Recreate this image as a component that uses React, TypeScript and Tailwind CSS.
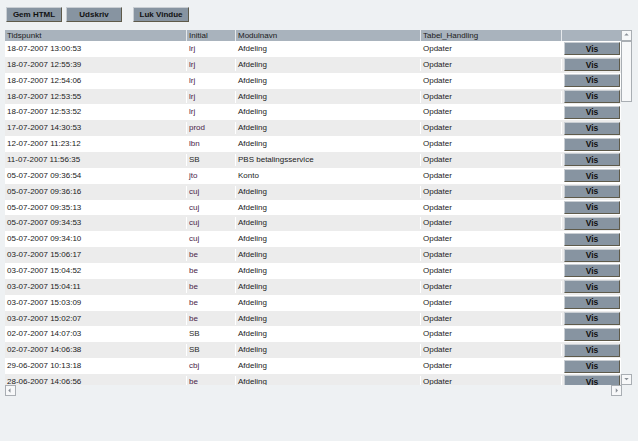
import React from "react";

const rows: [string, string, string, string][] = [
  ["18-07-2007 13:00:53", "lrj", "Afdeling", "Opdater"],
  ["18-07-2007 12:55:39", "lrj", "Afdeling", "Opdater"],
  ["18-07-2007 12:54:06", "lrj", "Afdeling", "Opdater"],
  ["18-07-2007 12:53:55", "lrj", "Afdeling", "Opdater"],
  ["18-07-2007 12:53:52", "lrj", "Afdeling", "Opdater"],
  ["17-07-2007 14:30:53", "prod", "Afdeling", "Opdater"],
  ["12-07-2007 11:23:12", "lbn", "Afdeling", "Opdater"],
  ["11-07-2007 11:56:35", "SB", "PBS betalingsservice", "Opdater"],
  ["05-07-2007 09:36:54", "jto", "Konto", "Opdater"],
  ["05-07-2007 09:36:16", "cuj", "Afdeling", "Opdater"],
  ["05-07-2007 09:35:13", "cuj", "Afdeling", "Opdater"],
  ["05-07-2007 09:34:53", "cuj", "Afdeling", "Opdater"],
  ["05-07-2007 09:34:10", "cuj", "Afdeling", "Opdater"],
  ["03-07-2007 15:06:17", "be", "Afdeling", "Opdater"],
  ["03-07-2007 15:04:52", "be", "Afdeling", "Opdater"],
  ["03-07-2007 15:04:11", "be", "Afdeling", "Opdater"],
  ["03-07-2007 15:03:09", "be", "Afdeling", "Opdater"],
  ["03-07-2007 15:02:07", "be", "Afdeling", "Opdater"],
  ["02-07-2007 14:07:03", "SB", "Afdeling", "Opdater"],
  ["02-07-2007 14:06:38", "SB", "Afdeling", "Opdater"],
  ["29-06-2007 10:13:18", "cbj", "Afdeling", "Opdater"],
  ["28-06-2007 14:06:56", "be", "Afdeling", "Opdater"],
];

const cols = "grid grid-cols-[182px_49px_185px_141px_59px]";

function GrayButton({ label, className = "" }: { label: string; className?: string }) {
  return (
    <button
      className={`h-[15px] w-[56px] border border-t-[#c9ced3] border-l-[#c9ced3] border-b-[#5e5a4a] border-r-[#5e5a4a] bg-[#8794a1] text-[8px] font-bold leading-none text-[#111] ${className}`}
    >
      {label}
    </button>
  );
}

function ArrowBox({ dir }: { dir: "up" | "down" | "left" | "right" }) {
  const tri: Record<string, string> = {
    up: "3,6 6,3 9,6",
    down: "3,4 6,7 9,4",
    left: "6,3 3,6 6,9",
    right: "5,3 8,6 5,9",
  };
  return (
    <div className="flex h-[11px] w-[11px] items-center justify-center border border-[#a9aeb3] bg-[#f7f8f9]">
      <svg width="11" height="11" viewBox="0 0 12 12">
        <polygon points={tri[dir]} fill="#8a9097" />
      </svg>
    </div>
  );
}

export default function App() {
  return (
    <div
      className="h-[441px] w-[638px] overflow-hidden bg-[#eef1f3] text-[8px] text-[#222]"
      style={{ fontFamily: "Arial, 'Liberation Sans', sans-serif" }}
    >
      <div className="flex gap-[4px] pl-[6px] pt-[7px]">
        <GrayButton label="Gem HTML" />
        <GrayButton label="Udskriv" />
        <GrayButton label="Luk Vindue" className="ml-[7px]" />
      </div>

      <div className="ml-[5px] mt-[8px] w-[629px]">
        <div className="flex h-[355px]">
          <div className="w-[616px] overflow-hidden">
            <div className={`${cols} h-[11px] bg-[#a9b3bd] leading-[11px] text-[#1a1a1a]`}>
              <div className="border-r border-[#e6e9ec] pl-[2px]">Tidspunkt</div>
              <div className="border-r border-[#e6e9ec] pl-[2px]">Initial</div>
              <div className="border-r border-[#e6e9ec] pl-[2px]">Modulnavn</div>
              <div className="border-r border-[#e6e9ec] pl-[2px]">Tabel_Handling</div>
              <div></div>
            </div>
            {rows.map((r, i) => (
              <div
                key={i}
                className={`${cols} h-[15.86px] items-center ${i % 2 === 0 ? "bg-white" : "bg-[#ececec]"}`}
              >
                <div className="border-r border-white pl-[2px]">{r[0]}</div>
                <div className={`border-r border-white pl-[2px] ${r[1] === "SB" ? "text-[#2a2a2a]" : "text-[#4a2448]"}`}>{r[1]}</div>
                <div className="border-r border-white pl-[2px]">{r[2]}</div>
                <div className="border-r border-white pl-[2px]">{r[3]}</div>
                <div className="flex justify-end pr-px">
                  <button className="h-[13px] w-[56px] border border-t-[#c9ced3] border-l-[#c9ced3] border-b-[#5e5a4a] border-r-[#5e5a4a] bg-[#8794a1] text-[8.5px] font-bold leading-none text-[#111]">
                    Vis
                  </button>
                </div>
              </div>
            ))}
          </div>
          <div className="flex w-[12px] flex-col">
            <ArrowBox dir="up" />
            <div className="relative flex-1">
              <div className="absolute left-0 top-0 h-[61px] w-[11px] border border-[#a9aeb3] bg-[#f7f8f9]" />
            </div>
            <ArrowBox dir="down" />
          </div>
        </div>
        <div className="flex h-[11px] w-[617px] justify-between">
          <ArrowBox dir="left" />
          <ArrowBox dir="right" />
        </div>
      </div>
    </div>
  );
}
